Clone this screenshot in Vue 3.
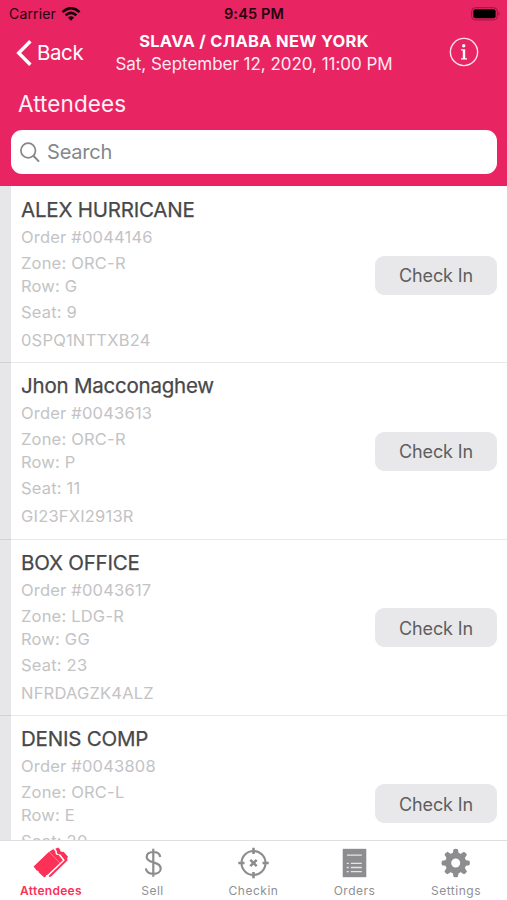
<script setup>
const attendees = [
  { name: 'ALEX HURRICANE', order: '0044146', zone: 'ORC-R', row: 'G', seat: '9', code: '0SPQ1NTTXB24' },
  { name: 'Jhon Macconaghew', order: '0043613', zone: 'ORC-R', row: 'P', seat: '11', code: 'GI23FXI2913R' },
  { name: 'BOX OFFICE', order: '0043617', zone: 'LDG-R', row: 'GG', seat: '23', code: 'NFRDAGZK4ALZ' },
  { name: 'DENIS COMP', order: '0043808', zone: 'ORC-L', row: 'E', seat: '20', code: '' },
]
const teeth = [0, 45, 90, 135, 180, 225, 270, 315]
</script>

<template>
  <div class="screen">
    <header class="header">
      <div class="status">
        <div class="carrier">
          <span>Carrier</span>
          <svg width="20" height="14" viewBox="0 0 20 14" fill="none" stroke="#16030a">
            <path d="M1.4 5.1Q10-2.7 18.6 5.1" stroke-width="2.6" />
            <path d="M4.6 8.3Q10 3.4 15.4 8.3" stroke-width="2.5" />
            <path d="M7 10.6Q10 8 13 10.6L10 13.7Z" fill="#16030a" stroke="none" />
          </svg>
        </div>
        <span class="time">9:45 PM</span>
        <svg class="battery" width="30" height="14" viewBox="0 0 30 14">
          <rect x="0.7" y="0.7" width="25.6" height="12.2" rx="3.6" fill="none" stroke="#97183f" />
          <rect x="2.4" y="2.3" width="22.2" height="9" rx="2" fill="#000" />
          <path d="M27.5 4.7Q30 6.7 27.5 8.8Z" fill="#97183f" />
        </svg>
      </div>
      <div class="nav">
        <div class="back">
          <svg width="16" height="26" viewBox="0 0 16 26" fill="none" stroke="#fff" stroke-width="3.4">
            <path d="M14.4 1.2 2.7 13 14.4 24.8" />
          </svg>
          <span>Back</span>
        </div>
        <div class="event">
          <div class="event-name">SLAVA / СЛАВА NEW YORK</div>
          <div class="event-date">Sat, September 12, 2020, 11:00 PM</div>
        </div>
        <svg class="info" width="30" height="30" viewBox="0 0 30 30">
          <circle cx="15" cy="15" r="13.6" fill="none" stroke="#ffe4ee" stroke-width="1.4" />
          <circle cx="14.7" cy="8.7" r="1.7" fill="#fff" />
          <path d="M12 12.2H16.2V21.2H18V22.5H12V21.2H13.8V13.5H12Z" fill="#fff" />
        </svg>
      </div>
      <h1 class="heading">Attendees</h1>
      <div class="search">
        <svg width="20" height="21" viewBox="0 0 20 21" fill="none" stroke="#85878a" stroke-width="1.7">
          <circle cx="8.2" cy="8.5" r="7.3" />
          <path d="M13.4 13.8 19 19.6" stroke-width="2" />
        </svg>
        <span>Search</span>
      </div>
    </header>

    <main class="list">
      <article v-for="a in attendees" :key="a.order" class="row">
        <div class="details">
          <div class="name">{{ a.name }}</div>
          <div class="line order">Order #{{ a.order }}</div>
          <div class="line zone">Zone: {{ a.zone }}</div>
          <div class="line seat-row">Row: {{ a.row }}</div>
          <div class="line seat">Seat: {{ a.seat }}</div>
          <div class="line code">{{ a.code }}</div>
        </div>
        <button class="check">Check In</button>
      </article>
    </main>

    <nav class="tabs">
      <div class="tab active">
        <svg width="36" height="32" viewBox="0 0 36 32">
          <path d="M22.4 1.7 25 .6 27.2 2.6Q26.8 4.8 29.2 4.9L30.6 4.7 35 9.8Q33.4 11.4 34.6 13.2L18.6 28.9 16.8 30.2 15.6 29 31.8 13.2 27.4 7.4Q23.6 7.8 23.9 4.2Z" fill="#fc3158" />
          <path d="M.6 19.4 15.2 5.6 20.4 2 22.4 4.4Q22 8 25.6 8L29.9 13.2 14.6 27.8Q12.6 27.6 12.8 29.6L11.2 30.6 5.9 25.6Q5.8 23.4 3.6 23.4Z" fill="#fc3158" />
          <path d="M16.6 5.2 26.8 16" stroke="#fff" stroke-width=".5" opacity=".8" />
        </svg>
        <span>Attendees</span>
      </div>
      <div class="tab">
        <svg width="36" height="32" viewBox="0 0 36 32" fill="none" stroke="#8d8d8f" stroke-width="2.2">
          <path d="M18.3 1.8V29.8M25.2 10C24.8 6.7 22.2 5 18.4 5 14.3 5 11.7 7 11.7 10 11.7 13.3 14.2 14.3 18.4 15.4 23.1 16.6 25.7 18 25.7 21.4 25.7 24.8 22.7 26.8 18.4 26.8 14 26.8 11.3 24.9 10.9 21.4" />
        </svg>
        <span>Sell</span>
      </div>
      <div class="tab">
        <svg width="36" height="32" viewBox="0 0 36 32" fill="none" stroke="#8d8d8f" stroke-width="2.1">
          <circle cx="17.5" cy="16" r="12" />
          <path d="M17.5 .8V7M17.5 25V31.2M2.3 16H8.5M26.5 16H32.7" stroke-width="2.6" />
          <path d="M14.3 12.8 20.7 19.2M20.7 12.8 14.3 19.2" stroke-width="2.6" />
        </svg>
        <span>Checkin</span>
      </div>
      <div class="tab">
        <svg width="36" height="32" viewBox="0 0 36 32">
          <path d="M5.7 1.8H29.3V30.2H5.7Z" fill="#8d8d8f" />
          <path d="M10 8.2H24.8M13.8 16.4H24.8M13.8 20.5H24.8M13.8 24.7H24.8M9.7 16.4H11.8M9.7 20.5H11.8M9.7 24.7H11.8" stroke="#e5e5e6" stroke-width="1.3" />
        </svg>
        <span>Orders</span>
      </div>
      <div class="tab">
        <svg width="36" height="32" viewBox="0 0 36 32">
          <g fill="#8d8d8f">
            <path v-for="t in teeth" :key="t" d="M14.6 7 15.5 2.3Q17.7 1.3 19.9 2.3L20.8 7Z" :transform="`rotate(${t} 17.7 16)`" />
          </g>
          <circle cx="17.7" cy="16" r="7.5" fill="none" stroke="#8d8d8f" stroke-width="6" />
        </svg>
        <span>Settings</span>
      </div>
    </nav>
  </div>
</template>

<style>
body { margin: 0; }
</style>

<style scoped>
.screen { width: 507px; height: 900px; display: flex; flex-direction: column; overflow: hidden; background: #fff; font-family: Inter, "Liberation Sans", sans-serif; }
.screen * { box-sizing: border-box; white-space: nowrap; }
svg { display: block; flex: none; }
.header { height: 186px; flex: none; background: #e82463; color: #fff; display: flex; flex-direction: column; }
.status { height: 28px; padding: 0 6px 0 9px; display: grid; grid-template-columns: 1fr auto 1fr; align-items: center; color: #24050f; font-size: 14px; line-height: 28px; }
.carrier { display: flex; align-items: center; gap: 5px; letter-spacing: .15px; }
.time { font-size: 14.5px; font-weight: 600; letter-spacing: .15px; padding-right: 2px; }
.battery { justify-self: end; }
.nav { height: 56px; display: grid; grid-template-columns: 100px 308px 99px; align-items: start; }
.back { display: flex; align-items: center; gap: 5px; padding-left: 16px; height: 49px; font-size: 20.5px; letter-spacing: -.4px; }
.event { text-align: center; }
.event-name { margin-top: 2px; font-size: 16.5px; line-height: 22px; font-weight: 700; letter-spacing: .3px; }
.event-date { font-size: 17px; line-height: 24px; letter-spacing: -.03px; color: #ffeaf2; }
.info { margin: 9px 0 0 41px; }
.heading { margin: 5px 0 0 18px; font-size: 22.5px; line-height: 30px; height: 30px; font-weight: 400; letter-spacing: .1px; color: #fff0f5; }
.search { margin: 11px 10px 0 11px; height: 44px; border-radius: 11px; background: #fff; display: flex; align-items: center; gap: 7px; padding-left: 9px; color: #85878a; font-size: 20px; letter-spacing: -.2px; }
.list { flex: 1; min-height: 0; overflow: hidden; padding-top: 1px; background: linear-gradient(to right, #e7e7e9 11px, #fff 11px); }
.row { height: 176.3px; border-bottom: 1px solid rgba(0, 0, 0, .09); padding: 10px 10px 0 21px; display: flex; justify-content: space-between; }
.name { font-size: 20.5px; line-height: 26px; color: #48484a; letter-spacing: -.22px; font-weight: 400; -webkit-text-stroke: .25px #48484a; }
.line { font-size: 16.5px; line-height: 24px; color: #c3c3c5; letter-spacing: .2px; }
.order { margin-top: 2px; height: 26px; }
.zone { height: 23px; }
.seat-row { height: 26px; }
.seat { height: 28px; }
.check { margin-top: 58.5px; width: 122px; height: 39px; flex: none; border: 0; border-radius: 9px; background: #e8e8ea; color: #5e5e60; font: 400 18px Inter, "Liberation Sans", sans-serif; letter-spacing: -.1px; padding: 1px 0 0; }
.tabs { height: 60px; flex: none; border-top: 1px solid #dedede; background: #fff; display: grid; grid-template-columns: 102px 101px 101px 101px 102px; }
.tab { display: flex; flex-direction: column; align-items: center; padding-top: 6px; color: #909092; font-size: 12px; line-height: 16px; letter-spacing: .5px; gap: 4px; font-weight: 400; }
.active { color: #fc3158; font-weight: 600; letter-spacing: .3px; }
</style>
